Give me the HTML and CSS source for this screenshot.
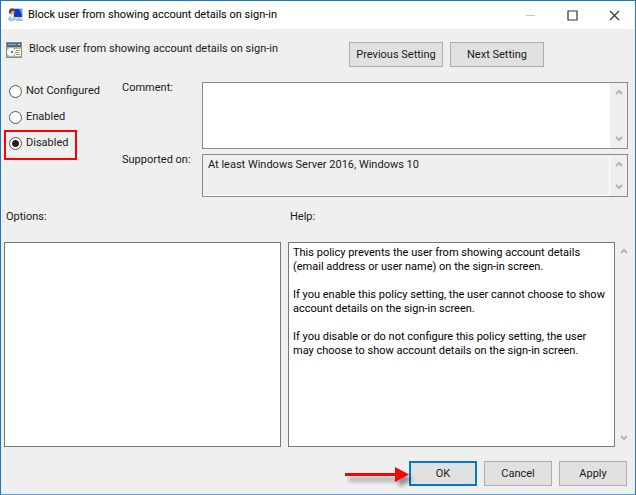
FILE: index.html
```html
<!DOCTYPE html>
<html lang="en">
<head>
  <meta charset="UTF-8">
  <meta name="viewport" content="width=device-width, initial-scale=1.0">
  <title>Block user from showing account details on sign-in</title>
  <link rel="stylesheet" href="styles.css">
</head>
<body>
  <div class="window">
    <div class="titlebar">
      <svg class="app-icon" width="16" height="16" viewBox="0 0 16 16" aria-hidden="true">
        <rect x="5" y="1" width="10" height="10" fill="#c9d3df"/>
        <rect x="6" y="2" width="8" height="8" fill="#1038c0"/>
        <path d="M11 2h3v6z" fill="#5f9df0"/>
        <path d="M9 11h4v1h2v2H8v-2h1z" fill="#b4bcc6"/>
        <circle cx="4" cy="5" r="2.500" fill="#d9a878"/>
        <path d="M1 6c-1-6 6-6 6-2L4 4 2 7z" fill="#5a4a3c"/>
        <path d="M0 13c0-6 8-6 8 0l-3 1H2z" fill="#a7c4dc"/>
        <path d="M3 9l1 4 1-4z" fill="#fff"/>
      </svg>
      <span class="titlebar-text">Block user from showing account details on sign-in</span>
      <button class="caption-btn" aria-label="Minimize" disabled>
        <svg width="11" height="11" viewBox="0 0 11 11"><path d="M1 5.5h9" stroke="#c4c4c4" fill="none"/></svg>
      </button>
      <button class="caption-btn" aria-label="Maximize">
        <svg width="11" height="11" viewBox="0 0 11 11"><path d="M1 1h9v9H1z" stroke="#333" stroke-width="1.2" fill="none"/></svg>
      </button>
      <button class="caption-btn" aria-label="Close">
        <svg width="11" height="11" viewBox="0 0 11 11"><path d="M1 1l9 9M10 1l-9 9" stroke="#333" stroke-width="1.2" fill="none"/></svg>
      </button>
    </div>

    <div class="header">
      <svg class="setting-icon" width="16" height="16" viewBox="0 0 16 16" aria-hidden="true">
        <rect x="0" y="0" width="16" height="16" fill="#8b8b86"/>
        <rect x="1" y="1" width="14" height="4" fill="#47698c"/>
        <path d="M2 2.500h8" stroke="#8aa8c6"/>
        <path d="M12 2.500h2" stroke="#e4e4e4"/>
        <rect x="1" y="5" width="14" height="10" fill="#b5b1a5"/>
        <circle cx="5" cy="10" r="4" fill="#f8f8f5"/>
        <circle cx="6" cy="10" r="1" fill="#444"/>
        <rect x="9" y="7" width="6" height="7" fill="#f8f8f5"/>
        <path d="M10 8.500h4M9 10.500h4M10 12.500h4" stroke="#a58b62"/>
      </svg>
      <span class="header-text">Block user from showing account details on sign-in</span>
      <button class="btn btn-nav">Previous Setting</button>
      <button class="btn btn-nav">Next Setting</button>
    </div>

    <div class="state">
      <div class="radios">
        <label class="radio"><input type="radio" name="state">Not Configured</label>
        <label class="radio"><input type="radio" name="state">Enabled</label>
        <label class="radio marked"><input type="radio" name="state" checked>Disabled</label>
      </div>
      <label class="field-label" for="comment">Comment:</label>
      <div class="field comment-field">
        <textarea id="comment"></textarea>
        <div class="scroll" aria-hidden="true">
          <svg width="10" height="8" viewBox="0 0 10 8"><path d="M2 6l3-3 3 3"/></svg>
          <svg width="10" height="8" viewBox="0 0 10 8"><path d="M2 2l3 3 3-3"/></svg>
        </div>
      </div>
      <label class="field-label" for="supported">Supported on:</label>
      <div class="field supported-field">
        <textarea id="supported" readonly>At least Windows Server 2016, Windows 10</textarea>
        <div class="scroll" aria-hidden="true">
          <svg width="10" height="8" viewBox="0 0 10 8"><path d="M2 6l3-3 3 3"/></svg>
          <svg width="10" height="8" viewBox="0 0 10 8"><path d="M2 2l3 3 3-3"/></svg>
        </div>
      </div>
    </div>

    <div class="panels">
      <div class="panel options">
        <div class="panel-title">Options:</div>
        <div class="panel-box"></div>
      </div>
      <div class="panel help">
        <div class="panel-title">Help:</div>
        <div class="help-row">
          <div class="panel-box">
            <p>This policy prevents the user from showing account details<br>(email address or user name) on the sign-in screen.</p>
            <p>If you enable this policy setting, the user cannot choose to show<br>account details on the sign-in screen.</p>
            <p>If you disable or do not configure this policy setting, the user<br>may choose to show account details on the sign-in screen.</p>
          </div>
          <div class="scroll" aria-hidden="true">
            <svg width="10" height="8" viewBox="0 0 10 8"><path d="M2 6l3-3 3 3"/></svg>
            <svg width="10" height="8" viewBox="0 0 10 8"><path d="M2 2l3 3 3-3"/></svg>
          </div>
        </div>
      </div>
    </div>

    <div class="footer">
      <div class="ok-wrap">
        <button class="btn btn-action btn-default">OK</button>
        <svg class="arrow" width="70" height="26" viewBox="0 0 70 26" aria-hidden="true">
          <path d="M5 10h50V4l14 7.500L55 19v-6H5z" fill="#f00"/>
        </svg>
      </div>
      <button class="btn btn-action">Cancel</button>
      <button class="btn btn-action">Apply</button>
    </div>
  </div>
</body>
</html>
```

FILE: styles.css
```css
* {
  box-sizing: border-box;
}

body {
  margin: 0;
  font-family: Roboto, "Open Sans", sans-serif;
  font-size: 11px;
  line-height: 14px;
  color: #1a1a1a;
}

button,
textarea {
  font: inherit;
  color: inherit;
}

.window {
  display: flex;
  flex-direction: column;
  min-height: 100vh;
  border: 1px solid #2176b8;
  border-bottom-color: #5f9fcd;
  background-color: #efefef;
}

/* title bar */
.titlebar {
  display: flex;
  align-items: center;
  height: 28px;
  padding-left: 7px;
  background-color: white;
  color: black;
}

.titlebar-text {
  flex: 1;
  margin-left: 4px;
}

.caption-btn {
  display: flex;
  align-items: center;
  justify-content: center;
  width: 42px;
  height: 28px;
  padding: 0;
  border: none;
  background: none;
}

/* setting name and navigation */
.header {
  display: flex;
  align-items: flex-start;
  padding: 13px 91px 0 5px;
}

.header-text {
  flex: 1;
  margin-left: 7px;
}

.btn {
  height: 25px;
  padding: 0;
  border: 1px solid #adadad;
  background-color: #e1e1e1;
}

.btn:hover {
  background-color: #e5f1fb;
}

.btn-nav {
  width: 94px;
  margin-left: 7px;
}

.btn-action {
  width: 68px;
}

.btn-default {
  border: 2px solid #0078d7;
}

/* state and fields */
.state {
  display: grid;
  grid-template-columns: 113px 80px 1fr;
  row-gap: 5px;
  padding: 15px 7px 0 8px;
}

.radios {
  grid-row: span 2;
  display: flex;
  flex-direction: column;
  align-items: flex-start;
  gap: 8px;
}

.radio {
  position: relative;
  display: flex;
  align-items: center;
  gap: 4px;
  height: 18px;
  line-height: 16px;
}

.radio input {
  appearance: none;
  width: 13px;
  height: 13px;
  margin: 0;
  border: 1px solid #555;
  border-radius: 50%;
  background-color: white;
}

.radio input:checked {
  background-image: radial-gradient(circle, #222 3px, transparent 4px);
}

.marked::after {
  content: "";
  position: absolute;
  top: -4px;
  bottom: -8px;
  left: -5px;
  width: 69px;
  border: 2px solid #f00;
}

.field-label {
  margin-top: -1px;
}

.field {
  display: flex;
  border: 1px solid #8a8a8a;
}

.comment-field {
  height: 67px;
  background-color: white;
}

.supported-field {
  height: 43px;
}

.field textarea {
  flex: 1;
  min-width: 0;
  padding: 3px 5px;
  border: none;
  background: none;
  resize: none;
  overflow: hidden;
}

.supported-field textarea {
  border-right: 1px solid white;
  border-bottom: 1px solid white;
}

.scroll {
  display: flex;
  flex-direction: column;
  align-items: center;
  justify-content: space-between;
  width: 17px;
  padding: 5px 0;
  background-color: #efefef;
}

.scroll path {
  fill: none;
  stroke: #b4b4b4;
  stroke-width: 2;
}

/* options and help */
.panels {
  flex: 1;
  display: flex;
  gap: 7px;
  padding: 13px 3px 0;
}

.panel {
  display: flex;
  flex-direction: column;
  min-width: 0;
}

.options {
  flex: 277;
}

.help {
  flex: 344;
}

.panel-title {
  padding: 0 2px;
  margin-bottom: 18px;
}

.panel-box {
  flex: 1;
  min-width: 0;
  padding: 3px 4px;
  border: 1px solid #777;
  background-color: white;
  color: black;
}

.help-row {
  flex: 1;
  display: flex;
}

.panel-box p {
  margin: 0 0 14px;
}

/* dialog buttons */
.footer {
  display: flex;
  justify-content: flex-end;
  gap: 7px;
  padding: 14px 8px 8px;
}

.ok-wrap {
  position: relative;
}

.arrow {
  position: absolute;
  top: 2px;
  right: 67px;
  filter: drop-shadow(4px 5px 2px rgba(0, 0, 0, 0.4));
}
```
